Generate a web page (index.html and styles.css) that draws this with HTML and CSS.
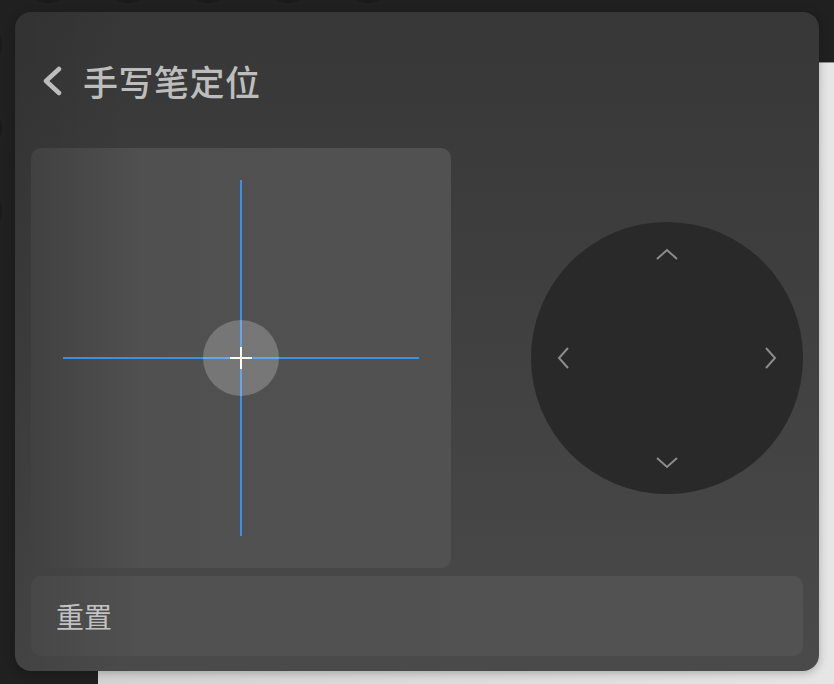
FILE: index.html
```html
<!DOCTYPE html>
<html lang="zh-CN">

<head>
   <meta charset="UTF-8">
   <meta name="viewport" content="width=device-width, initial-scale=1.0">
   <title>手写笔定位</title>
   <link rel="stylesheet" href="styles.css">
</head>

<body>
   <!-- window behind the panel -->
   <div class="backdrop"></div>
   <div class="dock-top">
      <span class="dot"></span><span class="dot"></span><span class="dot"></span><span class="dot"></span><span class="dot"></span>
   </div>
   <div class="dock-left">
      <span class="dot"></span><span class="dot"></span><span class="dot"></span>
   </div>

   <div class="panel">
      <div class="header">
         <svg class="back" width="22" height="30" viewBox="0 0 22 30">
            <polyline points="16,3 3,15 16,27" fill="none" stroke="#bdbdbd" stroke-width="4.5" stroke-linecap="round" stroke-linejoin="round" />
         </svg>
         <h1 class="title">手写笔定位</h1>
      </div>

      <div class="main">
         <div class="pad">
            <div class="line-v"></div>
            <div class="line-h"></div>
            <div class="handle"></div>
            <div class="plus-h"></div>
            <div class="plus-v"></div>
         </div>

         <div class="joystick">
            <svg width="272" height="272" viewBox="0 0 272 272">
               <g fill="none" stroke="#8c8c8c" stroke-width="2">
                  <polyline points="126,37 136,28 146,37" />
                  <polyline points="126,236 136,245 146,236" />
                  <polyline points="37,126 28,136 37,146" />
                  <polyline points="235,126 244,136 235,146" />
               </g>
            </svg>
         </div>
      </div>

      <div class="reset">重置</div>
   </div>
</body>

</html>
```

FILE: styles.css
```css
body {
   margin: 0;
   width: 834px;
   height: 684px;
   overflow: hidden;
   position: relative;
   background-color: #202020;
   font-family: 'Noto Sans CJK SC', 'Noto Sans', sans-serif;
   padding: 12px 15px 13px;
   box-sizing: border-box;
}

/* light window peeking out behind */
.backdrop {
   position: absolute;
   left: 98px;
   top: 62px;
   right: 0;
   bottom: 0;
   background: linear-gradient(to right, #d4d4d4, #e6e6e6);
   border-top: 1px solid #8e8e8e;
}

.dock-top {
   position: absolute;
   top: -41px;
   left: 26px;
   display: flex;
   gap: 36px;
}

.dock-left {
   position: absolute;
   left: -42px;
   top: 23px;
   display: flex;
   flex-direction: column;
   gap: 39px;
}

.dot {
   width: 44px;
   height: 44px;
   border-radius: 50%;
   background-color: #1a1a1a;
}

.panel {
   position: relative;
   width: 804px;
   height: 659px;
   box-sizing: border-box;
   padding: 0 16px 15px;
   border-radius: 16px;
   display: flex;
   flex-direction: column;
   background:
      linear-gradient(to right, rgba(0, 0, 0, 0.1), rgba(0, 0, 0, 0) 110px),
      linear-gradient(#373737, #4a4a4a);
   box-shadow: 0 2px 10px rgba(0, 0, 0, 0.25);
}

.header {
   height: 136px;
   display: flex;
   align-items: center;
   flex-shrink: 0;
}

.back {
   margin-left: 12px;
   margin-top: 2px;
}

.title {
   margin: 0 0 0 18px;
   font-size: 35px;
   font-weight: 500;
   color: #bdbdbd;
   letter-spacing: 0.5px;
}

.main {
   display: flex;
   align-items: center;
   justify-content: space-between;
}

.pad {
   position: relative;
   width: 420px;
   height: 420px;
   border-radius: 10px;
   background: linear-gradient(to right, #414141, #505050 110px, #515151);
}

.line-v {
   position: absolute;
   left: 209px;
   top: 32px;
   width: 2px;
   height: 356px;
   background-color: #3d8ee9;
}

.line-h {
   position: absolute;
   top: 209px;
   left: 32px;
   height: 2px;
   width: 356px;
   background-color: #3d8ee9;
}

.handle {
   position: absolute;
   left: 172px;
   top: 172px;
   width: 76px;
   height: 76px;
   border-radius: 50%;
   background-color: rgba(255, 255, 255, 0.22);
}

.plus-h {
   position: absolute;
   left: 199px;
   top: 209px;
   width: 22px;
   height: 2px;
   background-color: #fff;
}

.plus-v {
   position: absolute;
   left: 209px;
   top: 199px;
   width: 2px;
   height: 22px;
   background-color: #fff;
}

.joystick {
   width: 272px;
   height: 272px;
   border-radius: 50%;
   background-color: #292929;
}

.joystick svg {
   display: block;
}

.reset {
   margin-top: 8px;
   height: 80px;
   border-radius: 10px;
   padding-left: 25px;
   display: flex;
   align-items: center;
   font-size: 28px;
   color: #c2c2c2;
   background: linear-gradient(to right, #474747, #515151 110px, #525252);
}
```
